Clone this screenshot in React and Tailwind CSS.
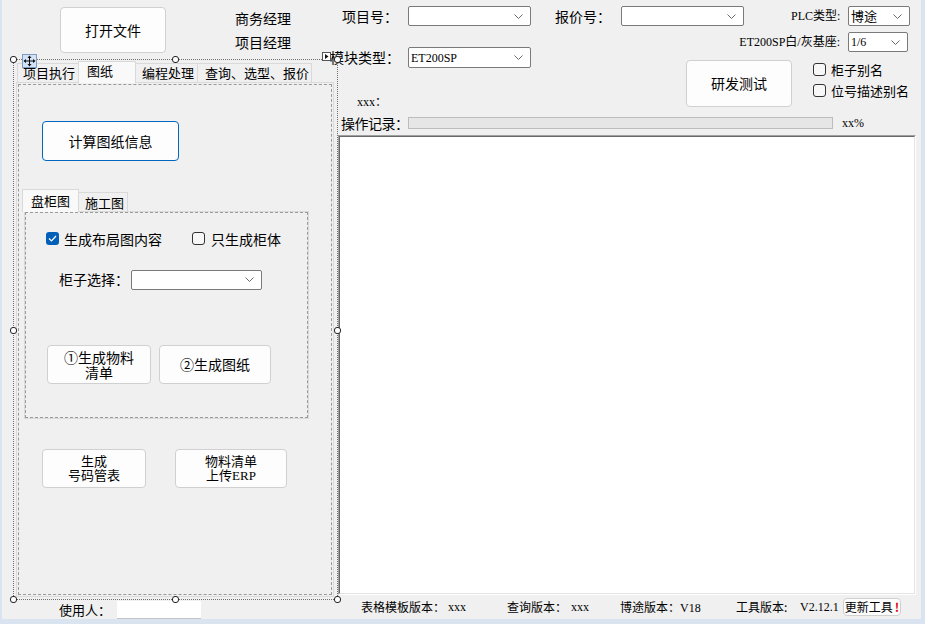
import React from "react";

const song = "font-['Liberation_Serif','Noto_Sans_CJK_SC',serif]";

function Chevron() {
  return (
    <svg width="9" height="5" viewBox="0 0 9 5" className="shrink-0">
      <path d="M0.5 0.5 L4.5 4.5 L8.5 0.5" fill="none" stroke="#6b6b6b" strokeWidth="1" />
    </svg>
  );
}

function Combo({ className = "", value, valueClass = "" }) {
  return (
    <div className={`flex items-center justify-between bg-white border border-[#7a7a7a] rounded-[2px] pl-[2px] pr-[7px] shrink-0 ${className}`}>
      <span className={`whitespace-nowrap ${valueClass}`}>{value}</span>
      <Chevron />
    </div>
  );
}

function Check({ checked }) {
  if (checked)
    return (
      <span className="w-[13px] h-[13px] rounded-[3px] bg-[#005fb8] flex items-center justify-center shrink-0">
        <svg width="9" height="7" viewBox="0 0 9 7">
          <path d="M1 3.5 L3.5 6 L8 1" fill="none" stroke="white" strokeWidth="1.2" />
        </svg>
      </span>
    );
  return <span className="block w-[13px] h-[13px] rounded-[3px] border border-[#333] bg-[#f7f7f7] shrink-0" />;
}

function Btn({ className = "", focus, children }) {
  const edge = focus ? "border-[#0067c0]" : "border-[#d0d0d0]";
  return (
    <div className={`flex items-center justify-center text-center whitespace-nowrap rounded-[4px] border bg-[#fdfdfd] shrink-0 ${edge} ${className}`}>
      {children}
    </div>
  );
}

function Handle({ className }) {
  return <span className={`absolute w-[7px] h-[7px] rounded-[3px] border border-[#222] bg-white z-20 ${className}`} />;
}

function LeftColumn() {
  return (
    <div className="w-[336px] shrink-0 flex flex-col">
      <div className="h-[59px] flex shrink-0">
        <Btn className="ml-[58px] mt-[7px] w-[106px] h-[46px] text-[14px]">打开文件</Btn>
        <div className="ml-[69px] pt-[6px] text-[14px] leading-[24px] whitespace-nowrap">
          <div>商务经理</div>
          <div>项目经理</div>
        </div>
      </div>

      {/* selected panel in the designer */}
      <div className="relative ml-[11px] w-[325px] h-[541px] shrink-0 border border-dotted border-[#6f6f6f]">
        <Handle className="left-[-4px] top-[-4px]" />
        <Handle className="left-[158px] top-[-4px]" />
        <Handle className="left-[320px] top-[-4px]" />
        <Handle className="left-[-4px] top-[267px]" />
        <Handle className="left-[320px] top-[267px]" />
        <Handle className="left-[-4px] top-[536px]" />
        <Handle className="left-[158px] top-[536px]" />
        <Handle className="left-[320px] top-[536px]" />
        <svg className="absolute left-[8px] top-[-6px] z-20" width="15" height="14" viewBox="0 0 15 14">
          <rect x="0.5" y="0.5" width="14" height="13" fill="#d3e3f6" stroke="#7d9cc0" />
          <path d="M7.5 2.5 V11.5 M2.5 7 H12.5" stroke="#111" strokeWidth="1" />
          <path d="M7.5 1.5 L5.5 4 H9.5 Z M7.5 12.5 L5.5 10 H9.5 Z M1.5 7 L4 5 V9 Z M13.5 7 L11 5 V9 Z" fill="#111" />
        </svg>
        <svg className="absolute left-[308px] top-[-8px] z-20" width="9" height="9" viewBox="0 0 9 9">
          <rect x="0.5" y="0.5" width="8" height="8" fill="#fff" stroke="#555" />
          <path d="M3 2 L6.5 4.5 L3 7 Z" fill="#111" />
        </svg>

        <div className="pl-[2px] pt-px">
          <div className="flex items-end h-[21px] text-[13px] pl-px whitespace-nowrap">
            <div className="w-[62px] h-[19px] pl-[5px] leading-[18px] border border-b-0 border-[#d9d9d9] bg-[#f0f0f0]">项目执行</div>
            <div className="w-[58px] h-[22px] -mb-px -ml-px relative z-10 pl-[8px] leading-[18px] border border-b-0 border-[#d9d9d9] bg-[#f9f9f9]">图纸</div>
            <div className="w-[63px] h-[19px] -ml-px pl-[6px] leading-[18px] border border-b-0 border-[#d9d9d9] bg-[#f0f0f0]">编程处理</div>
            <div className="w-[115px] h-[19px] -ml-px pl-[7px] leading-[18px] border border-b-0 border-[#d9d9d9] bg-[#f0f0f0]">查询、选型、报价</div>
          </div>
          <div className="w-[318px] h-[515px] border border-[#dadada] p-px">
            <div className="h-full border border-dashed border-[#9a9a9a] flex flex-col">
              <Btn focus className="ml-[23px] mt-[36px] w-[137px] h-[40px] text-[14px]">计算图纸信息</Btn>

              <div className="ml-[3px] mt-[28px]">
                <div className="flex items-end h-[22px] text-[13px] whitespace-nowrap">
                  <div className="w-[57px] h-[23px] -mb-px relative z-10 pl-[8px] leading-[21px] border border-b-0 border-[#d9d9d9] bg-[#f9f9f9]">盘柜图</div>
                  <div className="w-[50px] h-[19px] -ml-px pl-[6px] leading-[19px] border border-b-0 border-[#d9d9d9] bg-[#f0f0f0]">施工图</div>
                </div>
                <div className="ml-[2px] w-[285px] h-[208px] border border-[#dadada]">
                  <div className="h-full border border-dashed border-[#9a9a9a] flex flex-col">
                    <div className="flex items-center h-[13px] mt-[19px] ml-[20px] text-[14px] leading-[14px] whitespace-nowrap">
                      <Check checked />
                      <span className="ml-[5px]">生成布局图内容</span>
                      <span className="ml-[30px] flex"><Check /></span>
                      <span className="ml-[6px]">只生成柜体</span>
                    </div>
                    <div className="flex items-center mt-[24px] ml-[33px]">
                      <span className="w-[72px] shrink-0 text-[14px] whitespace-nowrap">柜子选择：</span>
                      <Combo className="w-[131px] h-[20px]" />
                    </div>
                    <div className="flex mt-[55px] ml-[21px] gap-[8px] text-[14px] leading-[15px]">
                      <Btn className="w-[104px] h-[39px]">①生成物料<br />清单</Btn>
                      <Btn className="w-[112px] h-[39px]">②生成图纸</Btn>
                    </div>
                  </div>
                </div>
              </div>

              <div className={`flex mt-[30px] ml-[23px] gap-[29px] text-[13px] leading-[14px] ${song}`}>
                <Btn className="w-[104px] h-[39px]">生成<br />号码管表</Btn>
                <Btn className="w-[112px] h-[39px]">物料清单<br />上传ERP</Btn>
              </div>
            </div>
          </div>
        </div>
      </div>

      <div className="flex items-center h-[19px]">
        <span className="ml-[57px] w-[58px] shrink-0 text-[13px] whitespace-nowrap">使用人：</span>
        <div className="w-[84px] h-[18px] bg-white border-b border-[#c4c4c4]" />
      </div>
    </div>
  );
}

function RightColumn() {
  return (
    <div className="w-[583px] shrink-0 flex flex-col whitespace-nowrap">
      <div className="flex items-center pt-[6px] h-[26px]">
        <span className="ml-[4px] w-[66px] shrink-0 text-[14px]">项目号：</span>
        <Combo className="w-[123px] h-[20px]" />
        <span className="ml-[24px] w-[66px] shrink-0 text-[14px]">报价号：</span>
        <Combo className="w-[123px] h-[20px]" />
        <span className={`ml-[47px] w-[57px] shrink-0 text-[12px] ${song}`}>PLC类型:</span>
        <Combo className="w-[62px] h-[20px]" value="博途" valueClass="text-[13px]" />
      </div>

      <div className="flex h-[81px]">
        <div className="w-[348px] shrink-0 flex flex-col">
          <div className="flex items-center mt-[21px] h-[21px]">
            <span className="-ml-[8px] w-[78px] shrink-0 text-[14px]">模块类型：</span>
            <Combo className="w-[123px] h-[21px]" value="ET200SP" valueClass={`text-[12px] ${song}`} />
          </div>
          <div className={`mt-[28px] ml-[19px] text-[12px] leading-[12px] ${song}`}>xxx：</div>
        </div>
        <div className="flex-1 flex flex-col">
          <div className="flex justify-end items-center mt-[6px] h-[20px] pr-[13px]">
            <span className={`text-[12px] ${song}`}>ET200SP白/灰基座:</span>
            <Combo className="ml-[8px] w-[60px] h-[20px]" value="1/6" valueClass={`text-[12px] ${song}`} />
          </div>
          <div className="flex mt-[8px]">
            <Btn className="w-[106px] h-[47px] text-[14px]">研发测试</Btn>
            <div className="ml-[21px] pt-[3px] flex flex-col gap-[8px] text-[13px] leading-[13px]">
              <div className="flex items-center h-[13px]">
                <Check />
                <span className="ml-[5px]">柜子别名</span>
              </div>
              <div className="flex items-center h-[13px]">
                <Check />
                <span className="ml-[5px]">位号描述别名</span>
              </div>
            </div>
          </div>
        </div>
      </div>

      <div className="flex items-center mt-[6px] h-[20px]">
        <span className="ml-[3px] w-[67px] shrink-0 text-[14px] tracking-[-0.5px]">操作记录：</span>
        <div className="w-[425px] h-[12px] shrink-0 border border-[#bcbcbc] bg-[#e6e6e6]" />
        <span className={`ml-[9px] text-[12px] ${song}`}>xx%</span>
      </div>

      <div className="mt-[2px] w-[578px] h-[460px] shrink-0 border border-t-[#a0a0a0] border-l-[#a0a0a0] border-r-white border-b-white">
        <div className="w-full h-full bg-white border border-t-[#696969] border-l-[#696969] border-r-[#e3e3e3] border-b-[#e3e3e3]" />
      </div>

      <div className="flex-1 flex items-center text-[12px]">
        <span className="ml-[23px] w-[87px] shrink-0">表格模板版本：</span>
        <span className={`w-[59px] shrink-0 ${song}`}>xxx</span>
        <span className="w-[64px] shrink-0">查询版本：</span>
        <span className={`w-[49px] shrink-0 ${song}`}>xxx</span>
        <span className="w-[116px] shrink-0">博途版本<span className={song}>：V18</span></span>
        <span className="w-[64px] shrink-0">工具版本:</span>
        <span className={`w-[43px] shrink-0 ${song}`}>V2.12.1</span>
        <Btn className="w-[58px] h-[18px] text-[12px] leading-[12px] rounded-[3px]">
          更新工具<span className="text-[#e00000] font-bold ml-[2px]">!</span>
        </Btn>
      </div>
    </div>
  );
}

export default function App() {
  return (
    <div className="w-[925px] h-[624px] bg-[#dae4f1] pl-[2px] font-['Noto_Sans_CJK_SC',sans-serif] text-black overflow-hidden">
      <div className="relative flex w-[919px] h-[619px] bg-[#f0f0f0]">
        <LeftColumn />
        <RightColumn />
      </div>
    </div>
  );
}
